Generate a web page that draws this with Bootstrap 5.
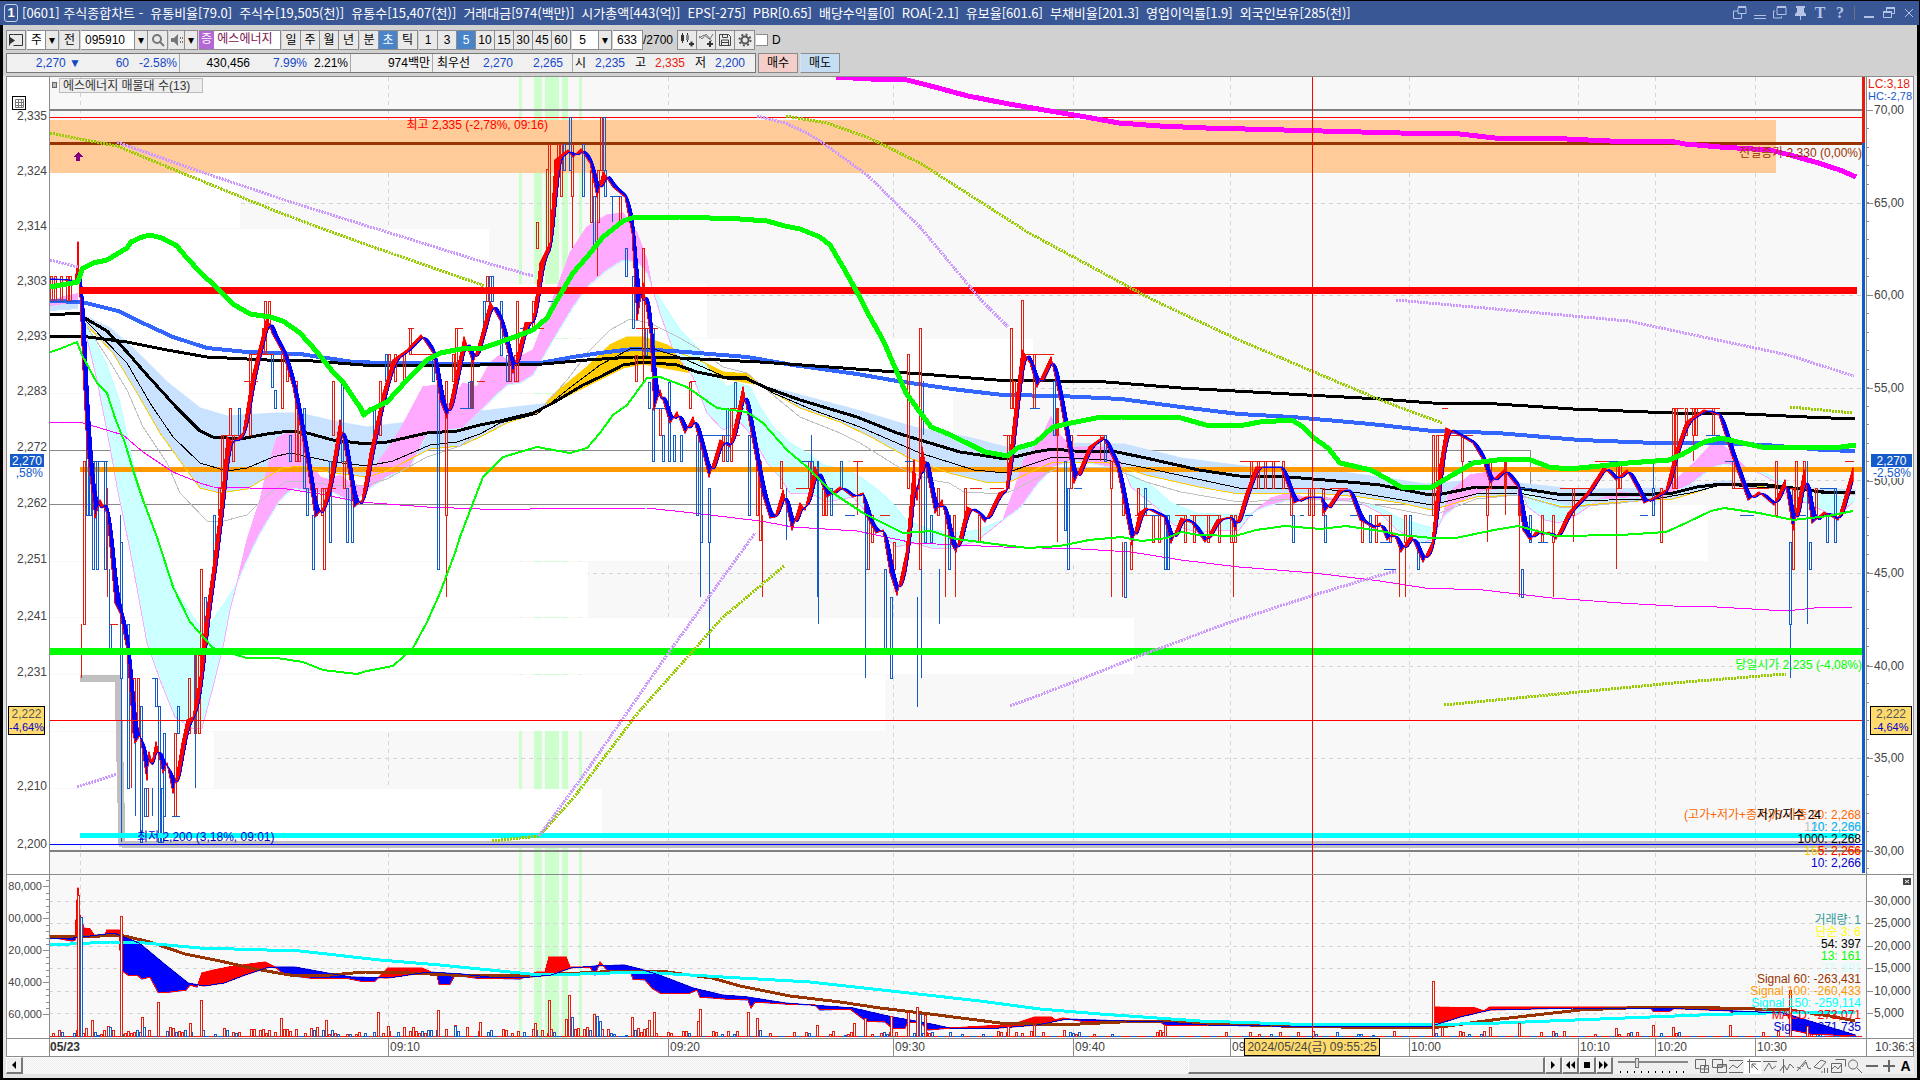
<!DOCTYPE html>
<html lang="ko">
<head>
<meta charset="utf-8">
<meta name="viewport" content="width=device-width, initial-scale=1">
<title>[0601] 주식종합차트</title>
<link rel="stylesheet" href="https://cdn.jsdelivr.net/npm/bootstrap@5.3.0/dist/css/bootstrap.min.css">
<style>
body{background:#000;padding-top:1px;font-family:"Liberation Sans","Noto Sans CJK KR",sans-serif;font-size:12px;line-height:16px;color:#000}
.titlebar{background:#3a5795;color:#fff;height:24px;margin-right:1px}
.titlebar .caption{font-family:"Noto Sans CJK KR",sans-serif;font-size:13px;gap:7px}
.titlebar button{border:0;background:none;padding:0;color:#b4c3e6;width:20px;height:20px;line-height:0}
.titlebar .glyph{font:bold 16px "Liberation Serif",serif}
.splitter{height:14px}
.appno{width:14px;height:18px;border:1px solid #c9d4ee;border-radius:3px;line-height:16px;font-size:13px}
.client{background:#e4e4e4;margin:0 3px 3px;padding-bottom:4px}
.tools{background:#d1d1d1;height:51px;padding:5px 3px 3px}
.toolrow{height:20px;margin-bottom:3px}
.bx{height:20px;border:1px solid #8c8c8c;background:#e9e9e9;padding:0;font-size:12px;line-height:16px;color:#000;border-radius:0;text-align:center;flex:none}
.bx+.bx{border-left-width:0}
.bx svg{display:block;margin:auto}
.white{background:#fff}
.on{background:#4a84c8;color:#fff}
.w12{width:13px}.w16{width:16px}.w19{width:19px}.w20{width:20px}.w27{width:27px}.w30{width:30px}.w40{width:40px}.w52{width:54px}
.buy{background:#f4cfc9}.sell{background:#c5ddf3}
select.bx,input.bx{appearance:none;padding:0 4px;text-align:left;outline:0}
.gp{margin-right:1px}
.gq{margin-right:2px}
.tick12{width:12px}
input.tick12{height:12px;padding:0}
.stock{width:82px;color:#7b0f4b;background:#fff;white-space:nowrap;overflow:hidden}
.stock span{background:#b468d4;color:#fff;width:15px;height:18px;display:inline-block}
.quote{height:20px;border:1px solid #777;background:#f0f0f0;width:750px;line-height:18px}
.quote>div{border-right:1px solid #aaa;white-space:nowrap;height:18px}
.quote>div:last-child{border:0}
.quote span{display:inline-block;text-align:right}
.bl{color:#1446c8}.rd{color:#e81c0c}
.q13{width:13px}.q21{width:21px}.q37{width:37px}.q39{width:39px}.q41{width:41px}.q43{width:43px}.q48{width:48px}.q50{width:50px}.q57{width:57px}.q70{width:70px}.q74{width:74px}.q79{width:79px}
.c82{width:82px}.c140{width:140px}.c171{width:171px}.c173{width:173px}.c180{width:180px}
.chartbox{padding:0 3px}
.chart{display:block;width:100%;height:auto;background:#fff}
.chart text{font-size:12px}
.chart .fine{font-size:11px}
.strip{height:17px;background:#efefef;margin:0 3px}
.track{background:repeating-conic-gradient(#fff 0 25%,#ebebeb 0 50%) 0 0/2px 2px}
.thumb{background:#efefef;width:357px;border:1px solid #fff;border-right:2px solid #777;border-bottom:2px solid #777}
.strip button{border:1px solid #fff;border-right:2px solid #777;border-bottom:2px solid #777;background:#efefef;padding:0;width:17px;line-height:0}
.strip .ic{border:0;width:17px;height:17px}
.strip .ic.act{background:#fff}
.strip .big{font-size:14px}
.zoomer{appearance:none;width:70px;height:16px;margin:0 5px;background:linear-gradient(#888,#888) 0 4px/100% 2px no-repeat,repeating-linear-gradient(90deg,#000 0 1px,transparent 1px 7px) 2px 14px/100% 2px no-repeat}
.zoomer::-webkit-slider-thumb{appearance:none;width:4px;height:10px;background:#ddd;border:1px solid #777;margin-top:-4px}
</style>
<script src="https://cdn.jsdelivr.net/npm/bootstrap@5.3.0/dist/js/bootstrap.bundle.min.js"></script>
</head>
<body>
<header class="titlebar d-flex align-items-center">
  <span class="appno ms-1 me-1 text-center fw-bold">1</span>
  <div class="caption d-flex flex-grow-1 text-nowrap">
    <span>[0601] 주식종합차트 -</span><span>유통비율[79.0]</span><span>주식수[19,505(천)]</span><span>유통수[15,407(천)]</span><span>거래대금[974(백만)]</span><span>시가총액[443(억)]</span><span>EPS[-275]</span><span>PBR[0.65]</span><span>배당수익률[0]</span><span>ROA[-2.1]</span><span>유보율[601.6]</span><span>부채비율[201.3]</span><span>영업이익률[1.9]</span><span>외국인보유[285(천)]</span>
  </div>
  <div class="d-flex align-items-center">
    <button aria-label="dock"><svg width="16" height="16" fill="none" stroke="currentColor"><path d="M6 2.5h8v6H6zM6 6H1.5v7.5h8V9" /><path d="M6 2h8" stroke-width="2"/></svg></button>
    <button aria-label="fold"><svg width="16" height="16" stroke="currentColor"><path d="M2 10.5h12M2 13.5h12"/></svg></button>
    <button aria-label="copy"><svg width="16" height="16" fill="none" stroke="currentColor"><path d="M5 2.5h9v7H5zM3 6H1.500v7h8v-1.500"/><path d="M5 2h9" stroke-width="2"/></svg></button>
    <button aria-label="pin"><svg width="16" height="16" fill="currentColor"><path d="M4 1h9v2h-1v4l2 2v2H9v4H8v-4H3V9l2-2V3H4z"/></svg></button>
    <button class="glyph">T</button>
    <button class="glyph">?</button>
    <span class="splitter border-start border-secondary ms-1"></span>
    <button aria-label="minimize" class="ms-1"><svg width="16" height="16"><path d="M3 12h10" stroke="currentColor" stroke-width="2"/></svg></button>
    <button aria-label="restore"><svg width="16" height="16" fill="none" stroke="currentColor"><path d="M5.500 6V3.500h8v5H11M2.500 7.500h8v5h-8z"/><path d="M2 7h9M5 3h9" stroke-width="2"/></svg></button>
    <button aria-label="close"><svg width="16" height="16"><path d="M4 4l8 8M12 4l-8 8" stroke="currentColor"/></svg></button>
  </div>
</header>
<main class="client">
  <section class="tools">
    <div class="toolrow d-flex align-items-center">
      <button class="bx w20 gp" aria-label="패널"><svg width="16" height="14" fill="none" stroke="#333"><path d="M5.500 1.500h9v11h-9M1.500 1.500v11M1.500 1.500h4"/><path d="M2 4v7l5-3.500z" fill="#333" stroke="none"/></svg></button>
      <select class="bx white w19" aria-label="종류"><option>주</option></select><button class="bx w12 gp" aria-label="열기">▾</button>
      <button class="bx w20 gp">전</button>
      <input class="bx white w52" aria-label="종목코드" value="095910"><button class="bx w12" aria-label="목록">▾</button><button class="bx w20 gp" aria-label="검색"><svg width="14" height="14" fill="none" stroke="#777" stroke-width="2"><circle cx="6" cy="6" r="4"/><path d="M9 9l4 4"/></svg></button>
      <button class="bx w16" aria-label="소리"><svg width="14" height="14" fill="#777"><path d="M1 5h3l4-4v12L4 9H1z"/><path d="M10 4h1v2h-1zM10 8h1v2h-1zM12 4h1v2h-1zM12 8h1v2h-1z"/></svg></button><button class="bx w12 gp" aria-label="소리 설정">▾</button>
      <button class="bx stock text-start gp"><span class="text-center">증</span> 에스에너지</button>
      <button class="bx w19">일</button><button class="bx w19">주</button><button class="bx w19">월</button><button class="bx w20 gp">년</button>
      <button class="bx w19">분</button><button class="bx w19 on">초</button><button class="bx w20 gp">틱</button>
      <button class="bx w19">1</button><button class="bx w19">3</button><button class="bx w19 on">5</button><button class="bx w19">10</button><button class="bx w19">15</button><button class="bx w19">30</button><button class="bx w19">45</button><button class="bx w19 gp">60</button>
      <select class="bx white w27" aria-label="간격"><option>&nbsp;5</option></select><button class="bx w12 gp" aria-label="간격 열기">▾</button>
      <input class="bx white w30" aria-label="조회 수" value="633"><span class="me-1">/2700</span>
      <button class="bx w20" aria-label="캔들"><svg width="16" height="16"><path d="M3.500 1v10M8.500 1v9" stroke="#333"/><path d="M2 3h3v6H2z" fill="#333"/><path d="M7 3h3v5H7z" fill="#888"/><path d="M10 11h5v2h-5zM11.500 9.500h2v5h-2z" fill="#333"/></svg></button><button class="bx w19" aria-label="지표"><svg width="16" height="16"><path d="M1 4l3 3 4-5 4 5 3-5M1 6l5-3 4 3 4 3" stroke="#777" fill="none"/><path d="M9 11h6v2H9zM11 9h2v6h-2z" fill="#333"/></svg></button><button class="bx w19" aria-label="저장"><svg width="14" height="14" fill="none" stroke="#444"><path d="M1.500 1.500h9l2 2v9h-11zM4.500 1.500v3h5v-3M3.500 12v-5h7v5M4 9.500h6"/></svg></button><button class="bx w20 gp" aria-label="설정"><svg width="14" height="14" fill="none" stroke="#555"><circle cx="7" cy="7" r="3.500" stroke-width="2"/><circle cx="7" cy="7" r="5.500" stroke-width="2" stroke-dasharray="2 2.300"/></svg></button>
      <input type="checkbox" id="dchk" class="bx white tick12"><label for="dchk" class="ms-1">D</label>
    </div>
    <div class="d-flex">
      <div class="quote d-flex gq">
        <div class="bl c173"><span class="q74">2,270 ▼</span><span class="q48">60</span><span class="q48">-2.58%</span></div>
        <div class="c171"><span class="q70">430,456</span><span class="bl q57">7.99%</span><span class="q41">2.21%</span></div>
        <div class="c82"><span class="q79">974백만</span></div>
        <div class="c140"><span class="q37">최우선</span><span class="bl q43">2,270</span><span class="bl q50">2,265</span></div>
        <div class="c180"><span class="q13">시</span><span class="bl q39">2,235</span><span class="q21">고</span><span class="rd q39">2,335</span><span class="q21">저</span><span class="bl q39">2,200</span></div>
      </div>
      <button class="bx gq buy w40">매수</button><button class="bx sell w40 border-start">매도</button>
    </div>
  </section>
  <div class="chartbox"><svg class="chart" id="chart" viewBox="6 76 1908 981" role="img" aria-label="에스에너지 차트"></svg></div>
  <div class="strip d-flex">
    <button aria-label="왼쪽"><svg width="8" height="8"><path d="M6 0v8L2 4z"/></svg></button>
    <div class="track flex-grow-1 d-flex justify-content-end"><div class="thumb"></div></div>
    <button aria-label="재생"><svg width="8" height="8"><path d="M2 0v8l4-4z"/></svg></button><button aria-label="뒤로"><svg width="10" height="8"><path d="M5 0v8L1 4zM10 0v8L6 4z"/></svg></button><button aria-label="정지"><svg width="8" height="8"><path d="M1 1h6v6H1z"/></svg></button><button aria-label="앞으로"><svg width="10" height="8"><path d="M0 0v8l4-4zM5 0v8l4-4z"/></svg></button>
    <input type="range" class="zoomer" aria-label="확대" value="26">
    <div class="d-flex" id="icons"></div>
  </div>
</main>
<script>
const o=[];
const T=(x,y,t,c='#444',a='start',e='')=>o.push(`<text x="${x}" y="${y}" fill="${c}" text-anchor="${a}" ${e}>${t}</text>`);
const Rc=(x,y,w,h,f,e='')=>o.push(`<rect x="${x}" y="${y}" width="${w}" height="${h}" fill="${f}" ${e}/>`);
const L=(x1,y1,x2,y2,c,w=1,e='')=>o.push(`<path d="M${x1} ${y1}L${x2} ${y2}" stroke="${c}" stroke-width="${w}" shape-rendering="crispEdges" ${e}/>`);
const P=(s,c,w,e='')=>o.push(`<polyline points="${s}" fill="none" stroke="${c}" stroke-width="${w}" shape-rendering="crispEdges" stroke-linejoin="round" ${e}/>`);
const G=(s,c)=>o.push(`<polygon points="${s}" fill="${c}" shape-rendering="crispEdges"/>`);
const pts=s=>s.trim().split(/\s+/).map(p=>p.split(',').map(Number));
function at(a,x){if(x<=a[0][0])return a[0][1];for(let i=1;i<a.length;i++)if(x<=a[i][0]){const p=a[i-1],q=a[i];return p[1]+(q[1]-p[1])*(x-p[0])/((q[0]-p[0])||1)}return a[a.length-1][1]}
// vertical fill between two series, one colour for each sign of the difference
function between(a,b,x0,x1,up,dn){let u='',d='';for(let x=x0;x<=x1;x++){const p=at(a,x),q=at(b,x),s=`M${x} ${Math.min(p,q)-.5}V${Math.max(p,q)+.5}`;if(p<q)u+=s;else d+=s}
 if(up)o.push(`<path d="${u}" stroke="${up}" stroke-width="1.500"/>`);if(dn)o.push(`<path d="${d}" stroke="${dn}" stroke-width="1.500"/>`)}
const RED='#e81c0c',BLU='#145ac8';
Rc(49,76,1817,962,'#f8f8f8');
[[519,3],[534,8],[545,14],[562,6],[579,3]].forEach(b=>Rc(b[0],77,b[1],961,'#cfc'));
const VX=[80,388,668,893,1073,1230,1409,1578,1655,1755];
VX.forEach(x=>L(x+.5,77,x+.5,1038,'#d4d4d4',1,'stroke-dasharray="4 4"'));
[203,295,388,480,573,666,758,901,923,946,968,991,1013].forEach(y=>L(49,y+.5,1862,y+.5,'#d4d4d4',1,'stroke-dasharray="4 4"'));
Rc(49,120,1727,53,'#ffcb98');
[[173,55,240],[229,54,489],[284,54,707],[339,54,1033],[394,56,953],[505,56,1708],[562,55,588],[618,56,1134],[675,56,885],[732,56,214],[789,55,602]].forEach(b=>Rc(49,b[0],b[2]-49,b[1],'#fff'));
Rc(48.5,450.5,1482,54,'#fff','stroke="#888"');
L(49,110,1862,110,'#808080',2);L(49,851,1862,851,'#808080',2);L(49,117.5,1862,117.5,'red');
T(548,129,'최고 2,335 (-2,78%, 09:16)','red','end');
// moving-average clouds
const cu=pts('83,315 110,328 133,348 167,382 200,408 227,416 277,413 300,413 333,421 367,427 410,422 460,417 473,412 533,405 553,403 583,388 623,368 643,364 697,374 727,379 760,385 793,393 857,410 914,427 967,437 1006,447 1053,443 1124,444 1181,458 1235,465 1289,471 1342,472 1380,477 1425,484 1473,480 1518,483 1573,489 1673,488 1724,481 1793,487 1855,490');
const ye='87,325 113,353 140,398 160,433 183,465 200,488 220,493 247,489 267,477 283,468 300,466 333,473 367,477 387,471 430,449 460,446 480,437 507,423 537,413 553,395 587,367 610,345 627,337 643,337 667,345 680,353 703,362 723,372 747,374 760,385 800,408 840,422 873,438 907,457 949,473 985,482 1010,482 1035,470 1053,462 1106,462 1146,475 1199,487 1239,494 1314,493 1360,497 1401,503 1432,510 1476,497 1518,495 1563,507 1621,502 1673,499 1697,492 1721,484 1793,489 1855,495';
between(cu,pts(ye),84,1855,'#c8e2ff','#fc0');
G('50,306 78,301 78,309 50,311','#c8e2ff');
G('50,300 65,296 78,293 78,302 50,306','#faf');
const ca=pts('83,318 85,323 107,365 120,403 130,450 143,503 160,547 177,593 193,617 203,630 213,620 230,595 237,583 247,560 260,533 280,500 293,488 317,493 333,492 353,503 370,488 387,477 410,467 427,435 447,430 463,428 483,408 507,385 520,383 533,375 553,340 573,307 587,287 607,270 623,260 637,262 647,273 652,287 667,310 680,330 697,347 707,367 727,387 737,383 750,387 760,407 773,427 790,443 807,453 823,465 847,470 860,477 878,490 892,503 906,520 931,530 956,533 978,530 1003,520 1021,507 1035,487 1053,467 1074,460 1124,470 1153,487 1171,503 1196,513 1235,515 1249,514 1264,507 1289,500 1353,501 1378,507 1401,519 1432,528 1442,518 1459,503 1483,492 1518,487 1542,500 1573,507 1600,500 1642,497 1673,492 1690,485 1711,468 1724,464 1759,470 1800,490 1824,495 1855,498');
const pk=pts('83,322 97,380 110,447 117,487 130,550 147,643 160,680 175,717 193,729 202,728 213,687 223,647 230,610 237,583 247,540 260,500 267,470 277,438 290,432 303,440 310,463 320,477 330,480 340,475 350,483 363,487 370,473 387,450 400,430 423,387 437,385 447,407 463,383 477,387 490,363 500,355 510,362 533,350 550,307 570,253 587,227 607,215 623,213 637,233 647,260 652,287 660,313 673,350 693,377 707,413 723,430 740,422 753,437 767,463 780,477 790,493 810,493 827,502 853,497 867,513 881,533 896,547 914,543 931,548 956,548 978,540 1003,520 1014,490 1024,460 1039,443 1051,417 1058,433 1071,447 1110,447 1124,469 1131,487 1156,507 1174,525 1199,533 1217,530 1239,530 1249,517 1256,510 1271,498 1289,493 1303,497 1353,499 1380,513 1397,530 1421,543 1432,540 1442,519 1449,493 1470,475 1483,473 1501,472 1518,483 1528,507 1545,520 1559,523 1573,517 1600,499 1621,492 1642,495 1666,495 1676,480 1697,460 1711,445 1721,443 1731,453 1745,467 1759,473 1776,482 1790,500 1807,503 1828,513 1841,513 1853,502');
between(pk,ca,83,1854,'#ffaaff','#ccffff');
P(ca.map(p=>p.join()).join(' '),'#bff',1);P(pk.map(p=>p.join()).join(' '),'#faf',1);
P('80,678 118,678 122,844 1855,844','silver',7);
L(80,469.5,1862,469.5,'#f90',5);
P(ye,'#fc0',1);
P('87,327 107,357 127,390 143,427 167,463 180,493 207,521 220,522 247,515 267,495 287,481 310,482 333,485 363,486 387,479 427,457 460,446 473,437 507,420 540,410 567,380 590,350 610,330 630,319 650,323 680,338 697,348 723,367 747,373 773,395 800,417 840,433 860,443 900,468 931,480 949,483 964,492 1003,494 1014,490 1039,477 1060,467 1110,467 1146,482 1181,492 1239,502 1314,498 1360,502 1432,516 1476,499 1518,495 1563,508 1621,503 1690,493 1721,485 1793,490 1855,495','silver',1);
L(49,143.500,1862,143.500,'#930',3);
// bold averages
P('50,301 82,302 118,311 147,325 173,337 207,348 247,352 300,354 353,362 387,363 480,364 540,363 573,357 600,353 633,349 673,351 747,357 793,365 857,374 903,382 960,390 1003,395 1060,396 1121,399 1181,407 1239,414 1292,417 1360,423 1380,425 1432,431 1497,433 1580,440 1655,443 1717,443 1766,445 1824,450 1855,451','#36f',4);
P('50,336 80,336 127,342 167,350 207,357 267,360 300,360 363,365 480,365 543,364 587,360 633,357 680,358 760,362 843,368 921,374 996,380 1060,381 1106,382 1181,388 1289,394 1380,399 1432,403 1497,404 1573,409 1673,413 1745,414 1807,417 1855,419','#000',3);
P('50,315 80,313 83,317 107,331 127,352 147,375 177,408 200,431 213,437 240,439 267,434 290,431 307,433 333,440 367,444 387,442 427,433 457,431 480,425 500,421 533,413 553,403 583,385 600,377 623,365 643,362 677,365 697,372 727,378 747,379 767,388 800,400 857,417 897,433 920,440 960,452 1006,459 1035,452 1053,449 1074,451 1117,452 1146,458 1199,470 1239,476 1289,477 1360,483 1380,485 1425,494 1442,494 1476,487 1518,488 1563,495 1655,494 1673,493 1697,487 1721,484 1759,484 1793,488 1828,493 1855,492','#000',3);
P('85,320 127,363 150,403 173,437 200,463 227,471 247,468 273,457 290,453 333,462 367,466 393,461 430,445 457,442 480,434 500,423 537,414 567,390 600,365 630,349 650,348 680,357 723,376 747,377 773,393 813,410 860,427 920,453 974,470 1006,473 1035,463 1053,457 1106,460 1146,468 1239,488 1314,488 1360,493 1432,505 1476,494 1518,493 1563,501 1655,499 1690,493 1721,485 1793,489 1855,493','#000',1);
P('50,422 80,422 100,428 123,435 143,452 173,472 200,483 213,487 287,489 320,494 360,502 427,507 480,509 530,509 647,508 693,513 760,521 793,527 857,531 914,543 1003,547 1081,549 1131,552 1181,560 1239,567 1314,573 1380,581 1425,588 1483,590 1552,598 1621,603 1673,606 1717,607 1786,611 1814,608 1853,607','#f0f',1);
// candles: x, top, bottom
const cr='51,276,301 55,276,301 61,276,301 67,276,301 70,276,301 84,461,624 134,678,733 138,678,733 147,788,816 175,733,816 189,678,733 195,655,733 199,655,733 201,569,648 219,488,515 222,435,488 230,408,435 233,435,461 250,354,435 263,328,354 265,301,354 269,301,328 282,354,408 287,354,381 296,381,461 299,408,461 316,488,515 322,488,515 324,488,569 333,381,435 344,461,488 380,381,435 389,354,381 395,354,381 404,354,381 410,328,354 446,381,515 453,354,381 456,328,381 472,354,408 487,276,301 510,355,381 515,355,381 517,301,381 533,301,328 537,222,248 547,169,248 549,144,248 558,144,170 561,144,196 572,144,196 591,170,222 598,170,222 601,117,170 620,196,222 636,355,381 643,248,355 660,408,435 690,382,408 723,435,461 731,408,461 757,461,515 760,461,540 781,461,488 809,461,488 823,488,515 826,488,515 872,515,542 868,515,569 894,542,569 908,354,488 920,328,569 938,488,515 965,488,515 954,515,542 979,515,542 1008,435,488 1011,328,408 1014,381,408 1022,300,381 1034,354,408 1057,408,435 1071,435,488 1111,461,488 1123,488,515 1131,542,569 1138,488,515 1153,515,542 1159,515,542 1185,515,542 1194,515,542 1208,515,542 1219,515,542 1231,515,542 1235,515,542 1251,461,488 1258,461,488 1265,461,488 1273,461,488 1283,461,488 1291,488,515 1309,488,515 1313,488,515 1323,488,515 1362,515,542 1376,515,542 1390,515,542 1405,515,542 1433,435,515 1437,435,488 1462,435,461 1487,488,515 1490,461,488 1505,461,488 1519,488,515 1542,515,542 1553,515,542 1573,488,515 1617,461,488 1620,461,488 1661,488,542 1673,408,488 1676,408,488 1686,408,435 1693,408,435 1696,408,435 1713,408,435 1733,461,488 1776,461,515 1793,488,569 1796,461,515 1804,461,488 1816,488,515';
const cb='87,435,515 90,461,515 93,461,569 97,461,569 105,461,569 110,624,648 121,542,678 128,624,788 141,706,842 145,788,816 156,678,706 159,706,842 162,788,842 164,733,816 178,706,733 205,597,624 214,515,569 239,408,435 272,354,387 275,390,408 290,435,461 304,408,488 307,488,515 313,515,569 330,461,542 342,381,461 347,488,542 352,488,542 374,408,435 386,354,381 433,354,381 438,381,569 471,381,408 469,382,408 484,301,328 490,276,301 492,276,301 501,301,355 507,355,381 564,144,170 570,117,170 583,144,196 594,196,248 605,170,196 604,117,170 626,248,276 633,276,328 646,328,355 649,382,408 653,408,461 663,435,461 669,382,461 674,435,461 681,435,461 697,435,515 701,435,542 709,488,542 727,408,461 735,382,408 749,435,515 812,461,488 831,488,515 841,461,488 866,515,569 885,569,650 891,597,678 931,515,542 949,515,569 925,461,542 1054,381,435 1065,461,530 1068,488,569 1105,435,461 1125,542,597 1145,488,515 1165,515,569 1168,515,569 1293,515,542 1325,515,542 1370,515,542 1410,515,542 1418,542,569 1522,569,597 1530,515,542 1653,488,515 1790,542,624 1810,542,569 1827,515,542 1835,488,542';
const cand=(s,c)=>pts(s).forEach(p=>Rc(p[0]-.5,p[1]+.5,2,p[2]-p[1],'none',`stroke="${c}" shape-rendering="crispEdges"`));
cand(cr,RED);cand(cb,BLU);
const wick=(s,c)=>pts(s).forEach(p=>L(p[0]+.5,p[1],p[0]+.5,p[2],c,1));
wick('81,624,678 78,242,280 107,488,597 131,690,788 572,196,248 597,222,276 1100,435,461 762,515,597 945,515,597 955,542,597 1057,408,542 1111,488,597 1122,542,597 1233,542,597 1399,542,597 1405,542,597 1462,461,488 1519,488,597 1487,515,542 1505,461,515 1553,542,597 1573,515,542 1616,488,569 1693,435,461 857,461,515 643,355,381 446,515,597',RED);
wick('121,678,842 109,569,624 120,515,542 195,733,788 135,740,816 152,788,816 195,655,788 569,117,144 612,196,222 654,328,408 709,542,648 786,488,540 811,435,488 817,461,597 865,569,678 917,597,707 921,569,678 923,381,435 939,569,624 1790,624,678 1807,461,624 1653,461,488 818,461,624 700,542,597',BLU);
const dash=(s,c)=>pts(s).forEach(p=>L(p[0],p[1]+.5,p[0]+p[2],p[1]+.5,c));
dash('110,624,8 222,435,16 244,381,14 250,354,24 324,488,12 408,328,6 412,354,22 455,328,8 477,381,8 532,328,12 636,328,22 690,381,6 710,435,30 732,408,12 796,488,16 853,461,10 880,515,10 970,488,12 990,488,14 1003,435,8 1024,354,22 1040,354,14 1077,435,28 1112,461,8 1135,515,30 1175,515,12 1190,515,30 1240,461,40 1290,488,30 1330,488,18 1375,515,14 1442,408,6 1439,435,34 1487,461,20 1560,488,30 1595,461,14 1615,461,12 1672,408,12 1690,408,30 1735,488,34 1790,488,6 1845,461,9',RED);
dash('50,301,28 92,461,16 152,678,4 172,816,8 460,408,8 548,301,5 520,328,10 610,196,12 655,408,10 700,435,30 800,461,12 845,515,10 905,461,10 1030,408,10 1074,488,8 1150,515,14 1245,515,8 1300,515,4 1350,515,8 1380,542,12 1384,569,12 1421,542,12 1468,461,12 1520,488,12 1538,542,10 1608,461,12 1640,515,8 1706,435,14 1725,461,12 1740,515,14 1796,515,10 1820,488,14',BLU);
// fast line and its trailing average
const f=pts('50,279 65,280 75,281 77,267 78,242 80,297 83,370 87,450 95,518 100,500 107,513 115,603 120,613 127,650 133,733 135,743 140,735 147,780 149,752 152,763 156,742 163,773 167,763 173,793 177,773 182,743 187,720 193,717 200,677 205,623 213,567 222,493 227,437 233,443 243,433 252,377 267,317 272,333 283,353 293,387 307,463 315,517 323,508 330,480 340,420 350,480 354,507 362,500 370,453 383,393 393,360 407,350 421,335 433,353 440,400 447,418 457,370 464,337 473,363 480,340 490,302 500,320 513,373 525,323 533,322 540,263 550,243 555,160 568,150 573,157 581,149 590,163 597,197 603,172 613,187 625,197 632,233 637,320 643,283 650,333 654,410 660,390 670,423 677,412 685,433 693,417 703,453 709,477 720,440 730,447 743,387 753,443 762,493 770,518 775,517 783,490 792,530 800,503 805,510 815,467 827,497 840,487 853,497 863,493 865,513 876,533 883,530 890,573 897,595 906,553 914,460 917,500 922,447 935,513 942,500 951,543 956,552 967,507 978,513 985,522 999,493 1006,490 1014,417 1022,350 1030,363 1037,387 1051,357 1060,400 1074,483 1089,447 1103,437 1117,467 1132,545 1139,513 1146,508 1164,517 1171,543 1181,518 1192,523 1205,542 1217,520 1231,517 1235,530 1246,493 1256,467 1281,467 1294,503 1306,497 1321,497 1324,513 1339,490 1349,490 1360,520 1374,528 1380,523 1387,540 1394,533 1401,552 1411,535 1423,562 1432,543 1439,470 1446,428 1459,435 1473,443 1483,460 1490,483 1504,470 1518,487 1523,530 1530,540 1537,530 1542,535 1549,532 1556,539 1568,513 1587,493 1604,467 1616,480 1627,470 1638,490 1644,503 1655,497 1666,490 1676,450 1686,422 1704,410 1719,415 1731,453 1748,500 1759,492 1774,505 1785,480 1793,530 1804,470 1812,523 1824,512 1838,520 1853,468');
const s=[];for(let x=50;x<=1853;x++){let t=0;for(let k=0;k<=8;k++)t+=at(f,x-k);s.push([x,t/9])}
between(f,s,50,1853,'red','blue');
P(f.map(p=>p.join()).join(' '),'red',1);P(s.map(p=>p[0]+','+p[1].toFixed(1)).join(' '),'blue',1);
P('50,352 57,350 77,342 82,355 97,383 107,393 115,418 125,443 133,470 143,500 157,537 173,587 190,622 213,648 247,658 277,658 303,662 323,670 357,674 367,671 393,666 413,648 427,622 440,593 455,553 460,537 473,503 483,477 503,457 537,447 570,453 587,448 600,433 613,415 627,405 647,378 660,377 687,387 717,408 747,412 763,423 787,450 807,467 833,493 863,513 887,525 903,533 931,531 956,539 1003,545 1028,548 1060,546 1089,540 1121,537 1142,541 1167,538 1181,532 1199,535 1235,536 1256,530 1285,526 1321,529 1346,526 1380,531 1401,535 1432,538 1456,538 1494,530 1518,526 1556,536 1621,535 1666,532 1686,523 1711,511 1724,508 1759,513 1793,520 1828,516 1853,511','lime',2);
L(80,290.5,1857,290.5,'red',7);
P('50,287 78,282 82,269 93,263 107,260 127,248 131,242 142,237 150,235 162,238 177,246 187,258 200,272 217,288 233,304 250,314 270,317 283,321 300,333 317,352 333,372 343,382 353,397 360,407 364,415 370,410 387,402 407,380 427,360 440,353 467,348 483,348 503,341 520,335 533,330 547,318 557,300 573,273 587,257 603,237 623,221 632,218 680,217 740,219 767,221 785,226 800,229 820,237 830,245 843,267 857,292 870,317 883,340 906,393 917,408 931,427 946,433 967,443 985,452 1008,456 1017,448 1035,443 1053,427 1071,423 1096,418 1121,417 1181,418 1206,425 1239,426 1260,422 1292,420 1303,427 1314,438 1328,448 1340,463 1371,470 1389,480 1401,487 1432,487 1449,477 1473,463 1497,460 1528,459 1549,467 1569,469 1600,466 1628,463 1669,460 1683,454 1704,442 1721,438 1738,442 1762,447 1841,447 1856,445','lime',5);
P('836,77 870,79 907,80 927,85 968,96 1009,104 1050,111 1086,117 1119,123 1160,126 1206,128 1322,131 1400,133 1460,134 1495,138 1545,138 1610,141 1670,141 1685,144 1720,147 1770,150 1790,155 1815,162 1840,170 1856,177','#f0f',5);
L(49,651.500,1862,651.500,'lime',7);L(80,835.500,1857,835.500,'cyan',5);
L(49,844.500,1862,844.500,'blue');
const dot='stroke-dasharray="2 1"',OL='#9c0',LV='#c9f';
['50,133 80,139 117,146 187,175 283,214 367,245 480,284 485,287','786,116 827,123 867,137 920,163 1029,233 1153,300 1239,340 1314,372 1383,401 1442,423','1790,407 1853,413','492,841 539,836 575,796 637,714 722,618 784,566','1444,705 1569,693 1673,683 1786,674'].forEach(p=>P(p,OL,3,dot));
['50,260 78,267','117,142 167,160 240,185 300,205 480,261 533,276','757,116 785,123 807,133 823,143 867,175 920,227 981,300 1008,327','1396,300 1628,321 1788,355 1854,376','77,787 117,774','539,836 588,769 667,655 755,533','1010,706 1074,682 1139,656 1231,622 1314,595 1364,580 1396,571'].forEach(p=>P(p,LV,3,dot));
G('78,152 83,157 80,157 80,161 76,161 76,157 73,157','purple');
T(137,841,'최저 2,200 (3,18%, 09:01)','#00c');
T(1862,157,'전일종가 2,330 (0,00%)','#930','end');
T(1862,669,'당일시가 2,235 (-4,08%)','lime','end');
T(1861,819,'(고가+저가+종가)/3 가중 20: 2,268','#f60','end');T(1821,819,'저가/지수 24','#000','end');
T(1861,831,'120: 2,280','silver','end');T(1861,831,'10: 2,266','#0bf','end');
T(1861,843,'1000: 2,268','#000','end');T(1861,855,'160: 2,264','#fc0','end');T(1861,855,'5: 2,266','red','end');T(1861,867,'10: 2,266','#00c','end');
// sub chart
L(49,1036.5,1862,1036.5,BLU,1);
L(49,1036.5,1862,1036.5,RED,1,'stroke-dasharray="9 7"');
const V=(t,c)=>pts(t).forEach(p=>Rc(p[0]-.5,p[1]+.5,2,1036-p[1],'#fff',`stroke="${c}" shape-rendering="crispEdges"`));
let rs='',bs='',n=7;for(let x=50;x<1850;x+=3){n=(n*73+41)%997;const d=x<650?1:x<1100?.45:.22;if(n%7<3*d+.3){const h=2+(n%13)*(d>.9?.6:.3);(n%3?rs+=` ${x},${1036-Math.round(h)}`:bs+=` ${x},${1036-Math.round(h*.7)}`)}}
V(rs,RED);V(bs,BLU);
const mf=pts('50,937 72,941 75,940 77,900 78,888 80,915 84,928 90,929 94,935 105,935 107,930 119,930 121,970 128,975 137,975 142,979 150,977 158,992 170,992 186,990 190,985 197,987 202,973 214,970 229,967 265,962 275,967 285,975 310,978 345,978 360,981 375,981 379,977 388,968 422,968 437,975 439,984 450,984 455,975 475,978 520,979 537,972 545,972 549,957 566,957 570,967 590,967 595,975 600,962 607,970 630,971 633,979 645,980 652,988 660,993 690,993 697,990 700,997 725,999 748,1000 751,1008 755,1002 785,1004 815,1005 820,1010 850,1009 866,1021 885,1022 892,1028 905,1028 908,1022 920,1022 928,1030 950,1028 1005,1025 1020,1022 1035,1017 1051,1017 1055,1020 1063,1018 1080,1021 1160,1022 1165,1025 1400,1027 1432,1025 1434,1007 1475,1008 1484,1011 1490,1007 1650,1007 1653,1011 1670,1011 1675,1008 1728,1009 1731,1012 1750,1013 1788,1014 1792,1030 1810,1034 1855,1036');
const ms=pts('50,938 73,938 82,937 114,933 139,943 163,963 188,983 204,986 224,983 245,975 269,967 294,967 327,973 351,977 388,978 429,972 461,974 498,978 531,977 551,975 571,968 596,966 624,965 640,969 659,975 693,988 722,995 747,997 785,1003 824,1006 853,1008 892,1017 921,1022 950,1028 999,1028 1037,1025 1067,1019 1125,1021 1163,1022 1207,1025 1270,1026 1400,1027 1432,1026 1460,1017 1490,1010 1573,1008 1660,1008 1733,1011 1783,1013 1855,1035');
between(mf,ms,50,1855,'red','blue');
P(mf.map(p=>p.join()).join(' '),'red',1);
P('50,936 80,937 120,935 150,942 185,954 220,961 255,969 290,975 330,975 365,972 410,973 450,975 520,976 560,974 600,972 660,971 712,978 740,986 790,996 840,1002 880,1008 930,1014 1000,1023 1060,1025 1120,1022 1170,1021 1220,1024 1280,1026 1400,1028 1440,1027 1500,1019 1580,1010 1650,1007 1720,1008 1790,1010 1830,1016 1855,1021','#930',3);
P('50,945 110,942 145,943 200,948 300,951 380,960 440,965 530,974 580,974 640,972 740,978 810,982 900,992 980,1001 1040,1009 1100,1014 1200,1021 1290,1024 1420,1025 1500,1023 1600,1019 1700,1015 1800,1012 1855,1013','cyan',3);
P(ms.map(p=>p.join()).join(' '),'#00c',1);
V('78,895 121,916 92,1020 108,1026 142,1017 158,1002 201,1000 190,1023 281,1018 326,1020 378,1012 388,1026 438,1010 455,1025 480,1022 535,1023 549,1000 566,1019 569,995 594,1014 632,1017 649,1020 654,1012 698,1021 700,1009 748,1012 757,1018 817,1025 854,1023 865,1018 891,1016 908,1012 917,1007 925,1015 1008,1026 1034,1025 1165,1025 1433,981 1442,1027 1490,1027 1519,1023 1553,1031 1564,1031 1616,1028 1653,1025 1673,1027 1730,1025 1790,990 1807,1026',RED);
V('81,917 110,1027 144,1027 455,1026 572,1017 597,1016 600,1021 760,1030 920,1014',BLU);
[['거래량: 1','#399',924],['단순 3: 6','#ff0',936],['54: 397','#000',948],['13: 161','lime',960],['27: 601','#cff',972],['Signal 60: -263,431','#930',983],['Signal 100: -260,433','#f90',995],['Signal 150: -259,114','cyan',1007],['MACD: -273,071','red',1019],['Signal: -271,735','#00c',1031]].forEach(t=>T(1861,t[2],t[0],t[1],'end'));
// axes
Rc(6,76,43,981,'#fff');Rc(1866,76,48,981,'#fff');Rc(6,1038,1908,19,'#fff');
L(1863.500,77,1863.500,143,RED,3);L(1863.500,143,1863.500,873,BLU,3);
L(1312.500,77,1312.500,1038,'red');L(49,720.500,1862,720.500,'red');
const gr='#8c8c8c';
L(6,76.500,1914,76.500,gr);L(6.500,76,6.500,1057,gr);L(49.500,76,49.500,1057,gr);L(1866.500,76,1866.500,1057,gr);L(1913.500,76,1913.500,1057,gr);L(6,874.500,1914,874.500,gr);L(6,1038.500,1914,1038.500,gr);L(6,1056.500,1914,1056.500,gr);
[['2,335',116],['2,324',171],['2,314',226],['2,303',281],['2,293',336],['2,283',391],['2,272',447],['2,262',503],['2,251',559],['2,241',616],['2,231',672],['2,210',786],['2,200',844]].forEach(a=>T(47,a[1]+4,a[0],'#444','end'));
[['70,00',110],['65,00',203],['60,00',295],['55,00',388],['50,00',481],['45,00',573],['40,00',666],['35,00',758],['30,00',851],['30,000',901],['25,000',923],['20,000',946],['15,000',968],['10,000',991],['5,000',1013]].forEach(a=>{T(1874,a[1]+4,a[0]);L(1867,a[1]+.5,1873,a[1]+.5,gr)});
for(let y=128.500;y<870;y+=18.500)L(1867,y,1869,y,gr);
[['80,000',886],['00,000',918],['20,000',950],['40,000',982],['60,000',1014]].forEach(a=>{T(42,a[1]+4,a[0],'#444','end','class="fine"');L(43,a[1]+.5,49,a[1]+.5,gr)});
for(let y=880.500;y<1016;y+=6.400)L(46,y,49,y,gr);
T(1868,88,'LC:3,18',RED);T(1868,100,'HC:-2,78',BLU,'start','class="fine"');
const tag=(x,w)=>{Rc(x,467,w,11,'#fff');T(x+w-1,477,x<99?',58%':'-2,58%',BLU,'end');Rc(x,454,w,13,BLU);T(x+w/2,465,'2,270','#fff','middle')};
tag(10,34);tag(1871,41);
[8,1870].forEach((x,i)=>{const w=i?42:37;Rc(x+.5,706.5,w-1,28,'#ffdb6e','stroke="#000"');T(x+w/2,718,'2,222','#555','middle');T(x+w/2,731,'-4,64%','#00c','middle','class="fine"')});
['09:10','09:20','09:30','09:40','09','10:00','10:10','10:20','10:30'].forEach((t,i)=>{const x=VX[i+1];L(x+.5,1038,x+.5,1056,gr);T(x+2,1051,t)});
T(50,1051,'05/23','#333','start','font-weight="bold"');T(1875,1051,'10:36:3');
Rc(1244.5,1038.5,135,17,'#ffdb6e','stroke="#000"');T(1312,1051,'2024/05/24(금) 09:55:25','#444','middle');
Rc(59.500,78.500,143,14,'#eee','stroke="#bbb"');T(63,90,'에스에너지 매물대 수(13)','#333');Rc(52.500,82.500,4,5,'#bbb','stroke="#666"');
Rc(12.500,96.500,13,13,'#fff','stroke="#000" stroke-width="1"');o.push('<path d="M15.500 99.500h8v8h-8zM15 102.500h9M15 105.500h9M18.500 99v9M21.500 99v9" fill="none" stroke="#777"/>');
Rc(1903,878,8,7,'#444');o.push('<path d="M1905 880l4 3M1909 880l-4 3" stroke="#fff"/>');
document.getElementById('chart').innerHTML=o.join('');
const ic=['M1.500 1.500h10v8M1.500 1.500v9h4M6.500 7.500h8v7h-8zM10.500 7v8M6 11h9','M1.500 1.500h10v8h-10zM6.500 6.500h9v8h-9zM7 8h8','M1 2.500h14M1 14.500h14M1 11l4-4 4 3 6-6','M2 3.500h14M4.500 1v14M7 6l6 6M7 6h4M7 6v4','M1 3.500h14M2 13l5-8 3 6 4-3','M4.500 1v14M1 13l4-6 3 5 3-6 4 4','M1 13l9-11M6 9l4-5 2 6 3 1M1 9l4 2','M1 9l7-7 5 2-6 7zM9 13v2M11.500 10v5M14.500 10v5','M5.500 1.500h10v7M1.500 5.500h10v9h-10zM2 11l3-3 3 3 3-4','M10 10l5 5M6 2a4.500 4.500 0 1 0 .1 0','M2 8h12','M2 8h12M8 2v12'];
document.getElementById('icons').innerHTML=ic.map((d,i)=>`<button class="ic${i==3?' act':''}" aria-label="도구 ${i+1}"><svg width="16" height="16" fill="none" stroke="#666" stroke-width="${i>9?2:1}"><path d="${d}"/></svg></button>`).join('')+'<button class="ic big fw-bold">A</button>';
</script>
</body>
</html>
